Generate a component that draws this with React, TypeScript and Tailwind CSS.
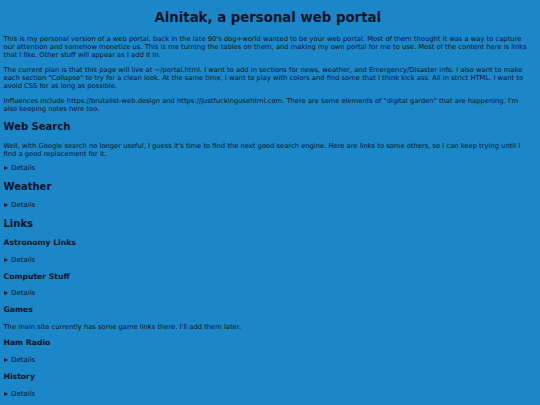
const body = 'text-[6.75px] leading-[8px]';

function Details() {
  return (
    <details className={`${body}`}>
      <summary className="flex list-none items-center gap-[3.5px] cursor-pointer [&::-webkit-details-marker]:hidden">
        <span className="inline-block w-0 h-0 border-y-[2.5px] border-y-transparent border-l-[4px] border-l-[#061426]" />
        <span className="text-[7px]">Details</span>
      </summary>
    </details>
  );
}

function H2({ children, className = '' }: { children: React.ReactNode; className?: string }) {
  return <h2 className={`text-[10px] leading-[14px] font-bold ${className}`}>{children}</h2>;
}

function H3({ children, className = '' }: { children: React.ReactNode; className?: string }) {
  return <h3 className={`text-[7.7px] leading-[10px] font-bold ${className}`}>{children}</h3>;
}

export default function App() {
  return (
    <div
      className="min-h-[405px] w-[540px] bg-[#1b87c8] text-[#061426] pl-[3.5px] pr-[8px] pb-2 overflow-hidden"
      style={{ fontFamily: '"DejaVu Sans", Verdana, sans-serif' }}
    >
      <h1 className="pt-[8px] text-center text-[13.3px] leading-[20px] font-bold">
        Alnitak, a personal web portal
      </h1>

      <p className={`${body} mt-[7px]`}>
        This is my personal version of a web portal. back in the late 90's dog+world wanted to be your web portal. Most of them thought it was a way to capture our attention and somehow monetize us. This is me turning the tables on them, and making my own portal for me to use. Most of the content here is links that I like. Other stuff will appear as I add it in.
      </p>
      <p className={`${body} mt-[7px]`}>
        The current plan is that this page will live at ~/portal.html. I want to add in sections for news, weather, and Emergency/Disaster info. I also want to make each section "Collapse" to try for a clean look. At the same time, I want to play with colors and find some that I think kick ass. All in strict HTML. I want to avoid CSS for as long as possible.
      </p>
      <p className={`${body} mt-[7px]`}>
        Influences include https://brutalist-web.design and https://justfuckingusehtml.com. There are some elements of "digital garden" that are happening. I'm also keeping notes here too.
      </p>

      <H2 className="mt-[7px]">Web Search</H2>
      <p className={`${body} mt-[8px]`}>
        Well, with Google search no longer useful, I guess it's time to find the next good search engine. Here are links to some others, so I can keep trying until I find a good replacement for it.
      </p>
      <div className="mt-[6px]"><Details /></div>

      <H2 className="mt-[8px]">Weather</H2>
      <div className="mt-[7px]"><Details /></div>

      <H2 className="mt-[8px]">Links</H2>
      <H3 className="mt-[7px]">Astronomy Links</H3>
      <div className="mt-[8px]"><Details /></div>

      <H3 className="mt-[8px]">Computer Stuff</H3>
      <div className="mt-[7px]"><Details /></div>

      <H3 className="mt-[8px]">Games</H3>
      <p className={`${body} mt-[8px]`}>
        The main site currently has some game links there. I'll add them later.
      </p>

      <H3 className="mt-[7px]">Ham Radio</H3>
      <div className="mt-[8px]"><Details /></div>

      <H3 className="mt-[8px]">History</H3>
      <div className="mt-[8px]"><Details /></div>
    </div>
  );
}
